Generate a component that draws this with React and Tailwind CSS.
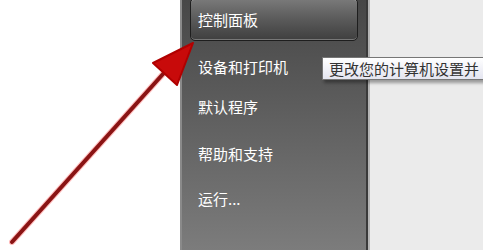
import React from 'react';

const font = { fontFamily: '"Noto Sans CJK SC", "Noto Sans", sans-serif' };

export default function App() {
    return (
        <div className="relative w-[483px] h-[250px] overflow-hidden flex bg-white" style={font}>
            <div className="w-[180px] shrink-0 bg-white"></div>

            <div className="w-[190px] shrink-0 flex bg-gradient-to-b from-[#474747] to-[#7c7c7c] border-l-[2px] border-[#8a8a8a]">
                <div className="flex-1 flex flex-col pl-[8px] pr-[8px]">
                    <div className="-mt-[2px] h-[43px] rounded-[5px] border border-[#1e1e1e] shadow-[inset_0_1px_0_#9a9a9a,inset_0_-1px_0_#777] bg-gradient-to-b from-[#7a7a7a] via-[#5a5a5a] to-[#3f3f3f] flex items-center pl-[7px]">
                        <span className="text-[15px] text-white leading-none">控制面板</span>
                    </div>
                    <div className="mt-[18px] pl-[8px] text-[15px] text-white leading-none">设备和打印机</div>
                    <div className="mt-[25px] pl-[8px] text-[15px] text-white leading-none">默认程序</div>
                    <div className="mt-[32px] pl-[8px] text-[15px] text-white leading-none">帮助和支持</div>
                    <div className="mt-[30px] pl-[8px] text-[15px] text-white leading-none">运行...</div>
                </div>
                <div className="w-[2px] bg-[#3a3a3a]"></div>
                <div className="w-[2px] bg-[#b5b5b5]"></div>
            </div>

            <div className="flex-1 bg-[#ebebeb]"></div>

            {/* tooltip, runs past the right edge */}
            <div className="absolute left-[322px] top-[57px] w-[175px] h-[23px] pl-[6px] flex items-center whitespace-nowrap bg-gradient-to-b from-[#ffffff] to-[#e4e5f0] border border-[#767676] shadow-[2px_3px_3px_rgba(0,0,0,0.35)]">
                <span className="text-[15px] text-[#333] leading-none">更改您的计算机设置并</span>
            </div>

            {/* arrow */}
            <svg className="absolute left-0 top-0" width="483" height="250" viewBox="0 0 483 250">
                <line x1="12" y1="242" x2="172" y2="64" stroke="#ff5a5a" strokeWidth="6" strokeLinecap="round" opacity="0.4" />
                <line x1="12" y1="242" x2="172" y2="64" stroke="#8a1414" strokeWidth="4" strokeLinecap="round" />
                <polygon points="193,43 153,63 177,85" fill="#c80a0a" stroke="#b00000" strokeWidth="2" strokeLinejoin="round" />
            </svg>
        </div>
    );
}
